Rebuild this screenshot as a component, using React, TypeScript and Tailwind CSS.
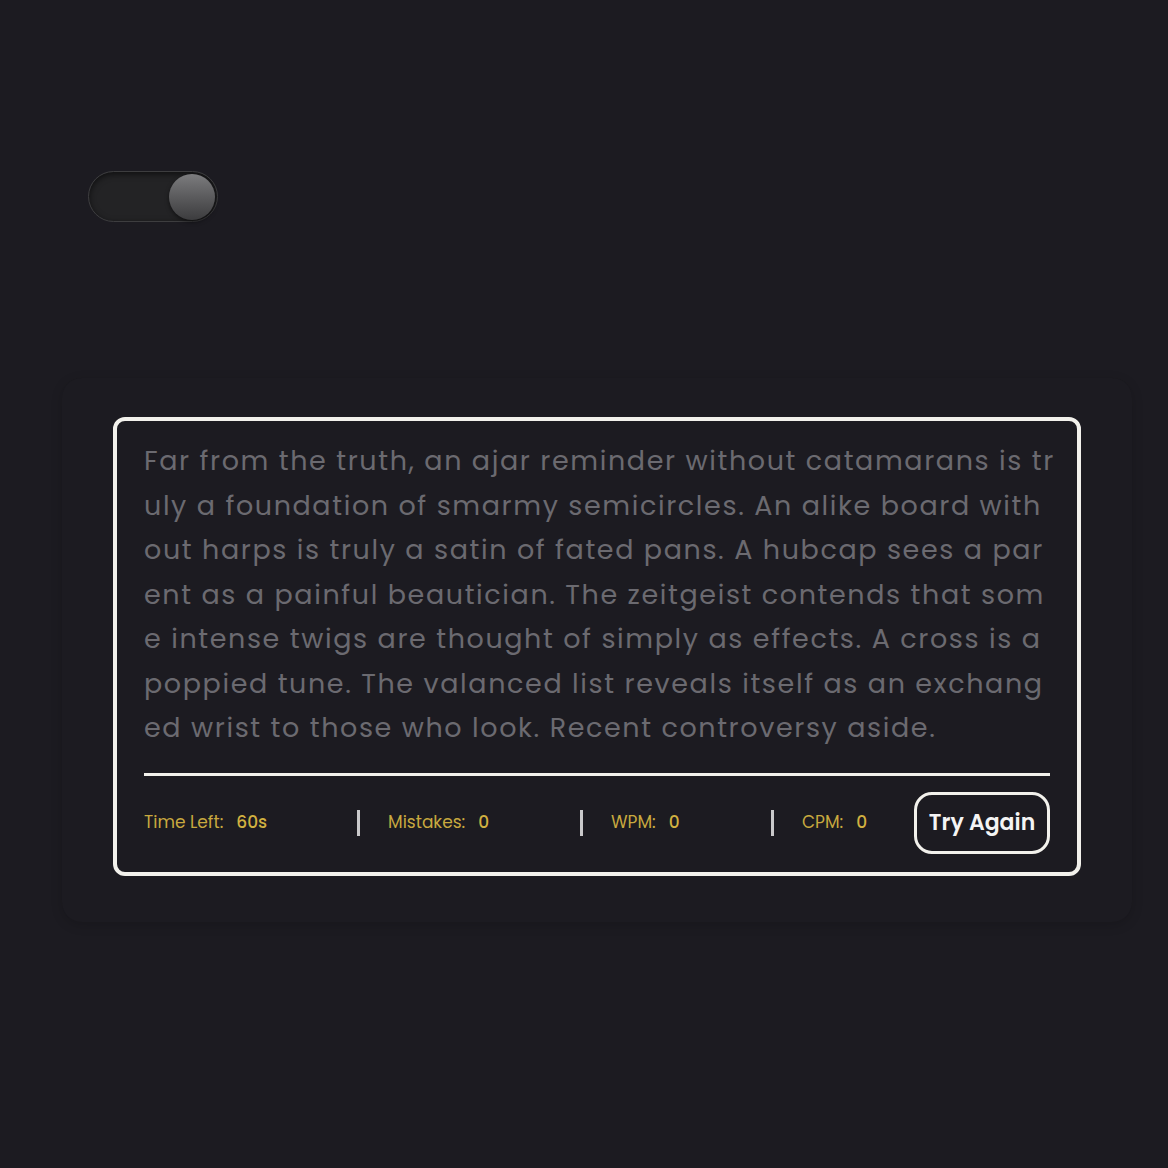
import { useState } from "react";

const lines = [
    "Far from the truth, an ajar reminder without catamarans is tr",
    "uly a foundation of smarmy semicircles. An alike board with",
    "out harps is truly a satin of fated pans. A hubcap sees a par",
    "ent as a painful beautician. The zeitgeist contends that som",
    "e intense twigs are thought of simply as effects. A cross is a",
    "poppied tune. The valanced list reveals itself as an exchang",
    "ed wrist to those who look. Recent controversy aside.",
];

const stats = [
    { label: "Time Left:", value: "60s", width: "w-[213px]" },
    { label: "Mistakes:", value: "0", width: "w-[223px]" },
    { label: "WPM:", value: "0", width: "w-[191px]" },
    { label: "CPM:", value: "0", width: "flex-1" },
];

export default function App() {
    const [dark, setDark] = useState(true);

    return (
        <div
            className="min-h-[1168px] w-full bg-[#1c1b21] pt-[171px]"
            style={{ fontFamily: "Poppins, Inter, 'Noto Sans', sans-serif" }}
        >
            {/* theme toggle */}
            <button
                onClick={() => setDark(!dark)}
                className="ml-[88px] flex h-[51px] w-[130px] items-center rounded-full border border-[#3d3d3f] bg-[#232325] px-[2px] shadow-[inset_0_2px_6px_rgba(0,0,0,0.6)]"
            >
                <span
                    className={`h-[46px] w-[46px] rounded-full bg-gradient-to-b from-[#7c7c7e] to-[#3c3c3e] shadow-[0_2px_4px_rgba(0,0,0,0.5)] ${dark ? "ml-auto" : ""}`}
                />
            </button>

            {/* card */}
            <div className="ml-[62px] mt-[156px] w-[1070px] rounded-[20px] bg-[#1c1b21] px-[51px] pb-[46px] pt-[39px] shadow-[0_3px_12px_rgba(0,0,0,0.16)]">
                <div className="rounded-[12px] border-[4px] border-[#f2f1ec] px-[27px] pb-[14px] pt-[18px]">
                    <p className="text-[27px] leading-[44.5px] tracking-[1.6px] text-[#6b6a70]">
                        {lines.map((l, i) => (
                            <span key={i} className="block whitespace-pre">
                                {l}
                            </span>
                        ))}
                    </p>

                    <div className="mt-[22px] h-[3px] w-full bg-[#f2f1ec]" />

                    <div className="flex items-center pt-[16px] pb-[4px]">
                        {stats.map((s, i) => (
                            <div key={s.label} className={`flex items-center ${s.width}`}>
                                {i > 0 && <div className="mr-[28px] h-[26px] w-[3px] bg-[#c9c9cb]" />}
                                <span className="text-[17px] text-[#c8a93f]">{s.label}</span>
                                <span className="ml-[13px] text-[17px] font-medium text-[#d1b140]">{s.value}</span>
                            </div>
                        ))}
                        <button className="flex h-[62px] w-[136px] items-center justify-center rounded-[18px] border-[3px] border-[#f2f1ec] text-[22px] font-semibold text-[#f4f4f4]">
                            Try Again
                        </button>
                    </div>
                </div>
            </div>
        </div>
    );
}
